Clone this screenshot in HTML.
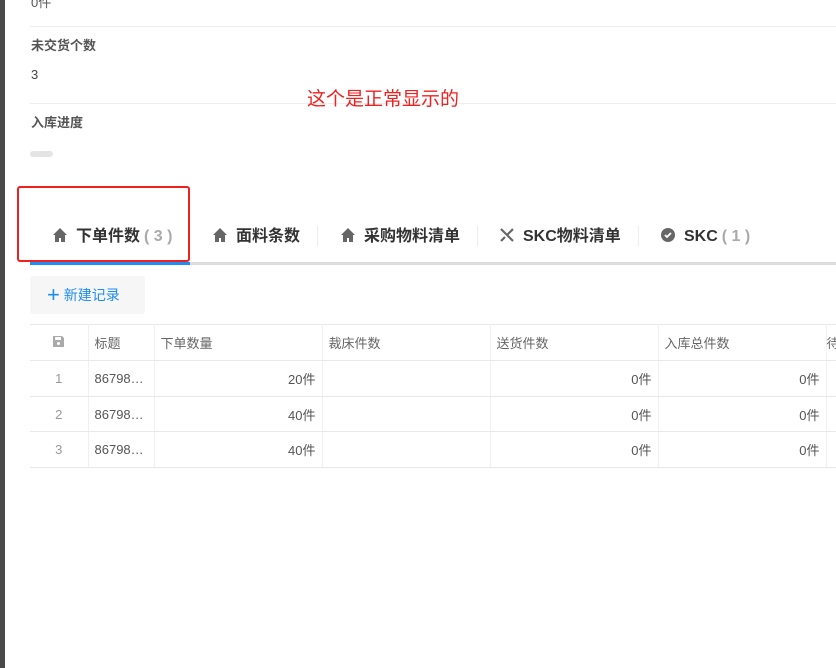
<!DOCTYPE html><html><head><meta charset="utf-8"><style>
body{margin:0;width:836px;height:668px;overflow:hidden;background:#fff;font-family:"Liberation Sans","Noto Sans CJK SC",sans-serif;position:relative}
.a{position:absolute}
.lbl{font-size:13px;color:#555;font-weight:bold}
.tab{position:absolute;top:227px;height:20px;line-height:20px;font-size:16px;font-weight:bold;color:#333;white-space:nowrap}
.tab svg{vertical-align:-2px;margin-right:8px}
.tab .n{color:#aaa;margin-left:4px}
.sep{position:absolute;top:226px;width:1px;height:20px;background:#eee}
table{position:absolute;left:30px;top:324px;border-collapse:collapse;font-size:13px;color:#666;table-layout:fixed;width:806px}
td{border-top:1px solid #e8e8e8;border-bottom:1px solid #e8e8e8;border-right:1px solid #f0f0f0;padding:0 6px;box-sizing:border-box;white-space:nowrap;overflow:hidden}
.r{text-align:right;color:#555}
</style></head><body>
<div class="a" style="left:0;top:0;width:5px;height:668px;background:#4a4a4a"></div>
<div class="a" style="left:31px;top:-8px;font-size:13px;color:#555">0件</div>
<div class="a" style="left:30px;top:26px;width:806px;height:1px;background:#eee"></div>
<div class="a lbl" style="left:31px;top:35px">未交货个数</div>
<div class="a" style="left:31px;top:67px;font-size:13px;color:#444">3</div>
<div class="a" style="left:30px;top:103px;width:806px;height:1px;background:#eee"></div>
<div class="a lbl" style="left:31px;top:112px">入库进度</div>
<div class="a" style="left:30px;top:151px;width:23px;height:6px;border-radius:3px;background:#e4e4e4"></div>
<div class="a" style="left:307px;top:84px;font-size:19px;color:#f02020">这个是正常显示的</div>
<div class="a" style="left:17px;top:186px;width:169px;height:72px;border:2.5px solid #f02020;border-radius:3px"></div>
<div class="a" style="left:30px;top:262px;width:806px;height:3px;background:#ddd"></div>
<div class="a" style="left:30px;top:262px;width:160px;height:3px;background:#1e8ef0"></div>
<svg width="0" height="0" style="position:absolute"><defs><symbol id="h" viewBox="0 0 16 16"><path d="M8 1L1 8h2v7h4v-4h2v4h4V8h2z" fill="#666"/></symbol></defs></svg>
<div class="tab" style="left:52px"><svg width="16" height="16"><use href="#h"/></svg>下单件数<span class="n">( 3 )</span></div>
<div class="tab" style="left:212px"><svg width="16" height="16"><use href="#h"/></svg>面料条数</div>
<div class="sep" style="left:317px"></div>
<div class="tab" style="left:340px"><svg width="16" height="16"><use href="#h"/></svg>采购物料清单</div>
<div class="sep" style="left:477px"></div>
<div class="tab" style="left:499px"><svg width="16" height="16" viewBox="0 0 16 16"><path d="M2 2l12 12M14 2L8 8M2 14l4-4" stroke="#666" stroke-width="2.2" fill="none"/></svg>SKC物料清单</div>
<div class="sep" style="left:638px"></div>
<div class="tab" style="left:660px"><svg width="16" height="16" viewBox="0 0 16 16"><circle cx="8" cy="8" r="7" fill="#666"/><path d="M5 8l2 2 4-4" stroke="#fff" stroke-width="1.8" fill="none"/></svg>SKC<span class="n">( 1 )</span></div>
<div class="a" style="left:30px;top:276px;width:115px;height:38px;background:#f6f6f6;border-radius:3px;font-size:14px;color:#1e8ef0;line-height:38px"><span style="font-size:22px;margin-left:17px;vertical-align:-2px">+</span> 新建记录</div>
<table>
<colgroup><col style="width:58px"><col style="width:66px"><col style="width:168px"><col style="width:168px"><col style="width:168px"><col style="width:168px"><col style="width:10px"></colgroup>
<tr style="height:36px"><td style="text-align:center"><svg width="13" height="13" viewBox="0 0 13 13"><path d="M1 1h9l2 2v9H1z" fill="#aaa"/><rect x="3" y="2" width="6" height="3" fill="#fff"/><circle cx="6.5" cy="8.5" r="1.5" fill="#fff"/></svg></td><td>标题</td><td>下单数量</td><td>裁床件数</td><td>送货件数</td><td>入库总件数</td><td style="padding:0">待</td></tr>
<tr style="height:36px"><td style="text-align:center;color:#999">1</td><td style="color:#555">86798…</td><td class="r">20件</td><td></td><td class="r">0件</td><td class="r">0件</td><td></td></tr>
<tr style="height:35px"><td style="text-align:center;color:#999">2</td><td style="color:#555">86798…</td><td class="r">40件</td><td></td><td class="r">0件</td><td class="r">0件</td><td></td></tr>
<tr style="height:36px"><td style="text-align:center;color:#999">3</td><td style="color:#555">86798…</td><td class="r">40件</td><td></td><td class="r">0件</td><td class="r">0件</td><td></td></tr>
</table>
</body></html>
